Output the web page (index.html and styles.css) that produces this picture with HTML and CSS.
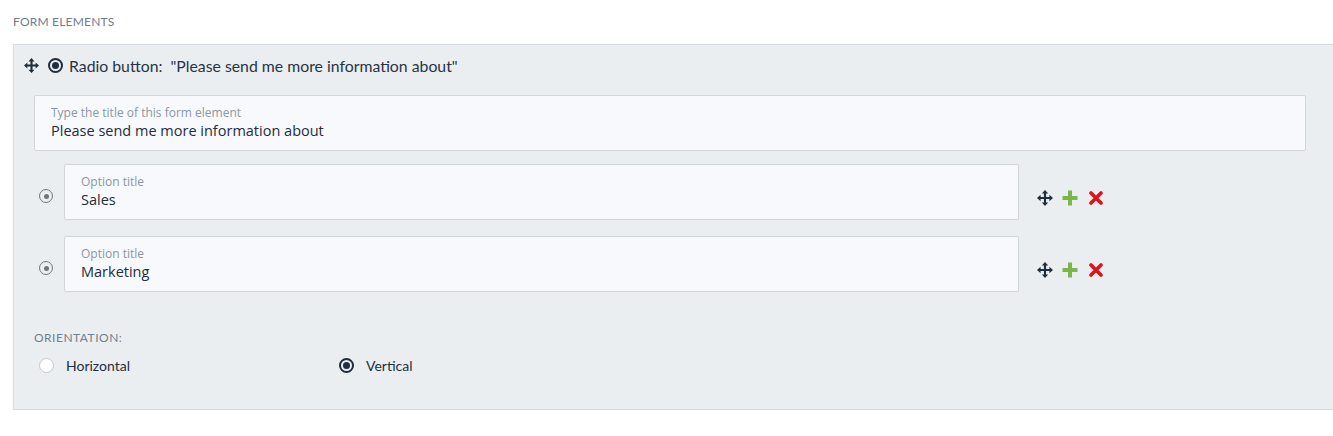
FILE: index.html
```html
<!DOCTYPE html>
<html>
<head>
<meta charset="utf-8">
<link rel="stylesheet" href="styles.css">
</head>
<body>
<div class="section-title">FORM ELEMENTS</div>
<div class="panel">
  <div class="panel-head">
    <svg class="move move-head" viewBox="0 0 16 16"><path d="M8 0 L11.2 3.6 H9.1 V6.9 H12.4 V4.8 L16 8 L12.4 11.2 V9.1 H9.1 V12.4 H11.2 L8 16 L4.8 12.4 H6.9 V9.1 H3.6 V11.2 L0 8 L3.6 4.8 V6.9 H6.9 V3.6 H4.8 Z" fill="#1f2d3d"/></svg>
    <span class="radio-dark"></span>
    <span class="head-text">Radio button:&nbsp; "Please send me more information about"</span>
  </div>
  <div class="field title-field">
    <div class="field-label">Type the title of this form element</div>
    <div class="field-value">Please send me more information about</div>
  </div>
  <div class="option">
    <span class="radio-gray"></span>
    <div class="field option-field">
      <div class="field-label">Option title</div>
      <div class="field-value">Sales</div>
    </div>
    <div class="actions">
      <svg class="move" viewBox="0 0 16 16"><path d="M8 0 L11.2 3.6 H9.1 V6.9 H12.4 V4.8 L16 8 L12.4 11.2 V9.1 H9.1 V12.4 H11.2 L8 16 L4.8 12.4 H6.9 V9.1 H3.6 V11.2 L0 8 L3.6 4.8 V6.9 H6.9 V3.6 H4.8 Z" fill="#1f2d3d"/></svg>
      <svg class="plus" viewBox="0 0 16 16"><path d="M6 0.5 H10 V6 H15.5 V10 H10 V15.5 H6 V10 H0.5 V6 H6 Z" fill="#7ab648"/></svg>
      <svg class="cross" viewBox="0 0 14 14"><path d="M2 2 L12 12 M12 2 L2 12" stroke="#e0121b" stroke-width="3.6" stroke-linecap="round"/></svg>
    </div>
  </div>
  <div class="option">
    <span class="radio-gray"></span>
    <div class="field option-field">
      <div class="field-label">Option title</div>
      <div class="field-value">Marketing</div>
    </div>
    <div class="actions">
      <svg class="move" viewBox="0 0 16 16"><path d="M8 0 L11.2 3.6 H9.1 V6.9 H12.4 V4.8 L16 8 L12.4 11.2 V9.1 H9.1 V12.4 H11.2 L8 16 L4.8 12.4 H6.9 V9.1 H3.6 V11.2 L0 8 L3.6 4.8 V6.9 H6.9 V3.6 H4.8 Z" fill="#1f2d3d"/></svg>
      <svg class="plus" viewBox="0 0 16 16"><path d="M6 0.5 H10 V6 H15.5 V10 H10 V15.5 H6 V10 H0.5 V6 H6 Z" fill="#7ab648"/></svg>
      <svg class="cross" viewBox="0 0 14 14"><path d="M2 2 L12 12 M12 2 L2 12" stroke="#e0121b" stroke-width="3.6" stroke-linecap="round"/></svg>
    </div>
  </div>
  <div class="orientation">
    <div class="orient-label">ORIENTATION:</div>
    <div class="orient-choices">
      <label class="choice choice-h"><span class="radio-empty"></span>Horizontal</label>
      <label class="choice"><span class="radio-dark"></span>Vertical</label>
    </div>
  </div>
</div>
</body>
</html>
```
FILE: styles.css
```css
html, body {
  margin: 0;
  padding: 0;
  background: #ffffff;
  overflow: hidden;
}
body {
  font-family: Lato, "Open Sans", sans-serif;
  color: #273444;
}
.section-title {
  font-size: 12px;
  letter-spacing: 0.2px;
  line-height: 14px;
  color: #6f7d8f;
  padding: 15px 0 0 13px;
  height: 44px;
  box-sizing: border-box;
}
.panel {
  margin-left: 13px;
  margin-right: -20px;
  background: #ebeef1;
  border-top: 1px solid #d9dce1;
  border-left: 1px solid #dcdfe3;
  border-bottom: 1px solid #d5d8dc;
  box-shadow: 0 2px 3px rgba(0,0,0,0.06);
  padding: 0 47px 30px 20px;
  height: 366px;
  box-sizing: border-box;
}
.panel-head {
  display: flex;
  align-items: center;
  height: 40px;
  margin-left: -10px;
}
.move {
  width: 16px;
  height: 16px;
  display: block;
}
.move-head {
  width: 15px;
  height: 15px;
  margin-right: 9px;
}
.radio-dark {
  width: 15px;
  height: 15px;
  box-sizing: border-box;
  border: 2px solid #1f2d3d;
  border-radius: 50%;
  display: inline-flex;
  align-items: center;
  justify-content: center;
  flex: none;
}
.radio-dark::after {
  content: "";
  width: 7px;
  height: 7px;
  border-radius: 50%;
  background: #1f2d3d;
}
.head-text {
  font-size: 15.8px;
  margin-left: 6px;
  color: #273444;
}
.field {
  background: #f8f9fc;
  border: 1px solid #d2d6dc;
  border-radius: 2px;
  box-sizing: border-box;
  height: 56px;
  padding: 9px 16px 0;
}
.field-label {
  font-family: "Open Sans", sans-serif;
  font-size: 12px;
  color: #8e97a3;
  line-height: 16px;
}
.field-value {
  font-family: "Open Sans", sans-serif;
  font-size: 14.5px;
  color: #1f2d3d;
  line-height: 20px;
  margin-top: 0;
}
.title-field {
  margin-top: 10px;
}
.option {
  display: flex;
  align-items: center;
  margin-top: 13px;
}
.option + .option {
  margin-top: 16px;
}
.radio-gray {
  width: 14px;
  height: 14px;
  box-sizing: border-box;
  border: 1.8px solid #72767c;
  border-radius: 50%;
  display: inline-flex;
  align-items: center;
  justify-content: center;
  margin-left: 5px;
  margin-right: 11px;
  margin-top: 8px;
  flex: none;
}
.radio-gray::after {
  content: "";
  width: 5px;
  height: 5px;
  border-radius: 50%;
  background: #72767c;
}
.option-field {
  width: 955px;
  flex: none;
}
.actions {
  display: flex;
  align-items: center;
  margin-left: 18px;
  margin-top: 12px;
}
.plus {
  width: 16px;
  height: 16px;
  margin-left: 9px;
  display: block;
}
.cross {
  width: 14px;
  height: 14px;
  margin-left: 11px;
  display: block;
}
.orientation {
  margin-top: 38px;
}
.orient-label {
  font-size: 12px;
  letter-spacing: 0.5px;
  color: #737f8f;
  line-height: 15px;
}
.orient-choices {
  display: flex;
  margin-top: 12px;
  padding-left: 5px;
}
.choice {
  display: flex;
  align-items: center;
  font-size: 14px;
  color: #1f2d3d;
  line-height: 17px;
}
.choice .radio-dark,
.choice .radio-empty {
  margin-right: 12px;
}
.choice-h {
  width: 300px;
}
.radio-empty {
  width: 15px;
  height: 15px;
  box-sizing: border-box;
  border: 1.5px solid #c4c7cc;
  background: #ffffff;
  border-radius: 50%;
  flex: none;
}
```
